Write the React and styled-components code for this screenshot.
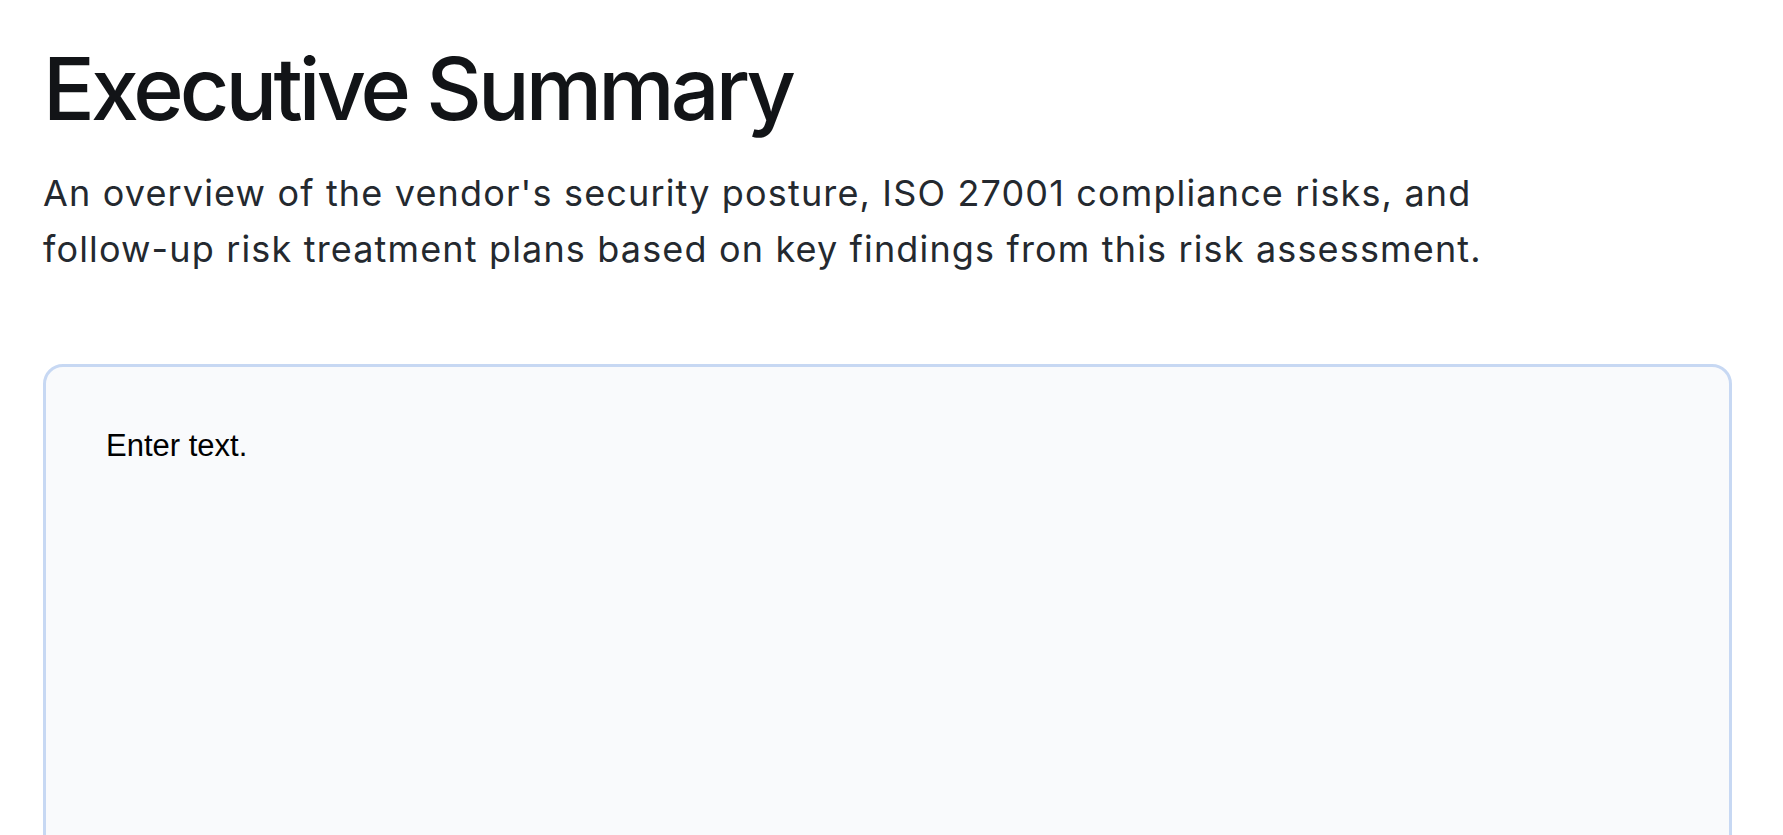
import React from "react";
import styled, { createGlobalStyle } from "styled-components";

const Global = createGlobalStyle`
  html, body { margin: 0; padding: 0; background: #ffffff; }
  body { font-family: Inter, "Noto Sans", sans-serif; }
`;

const Page = styled.main`
  display: flex;
  flex-direction: column;
  padding: 38px 51px 0 43px;
`;

const Title = styled.h1`
  margin: 0;
  font-family: Inter, sans-serif;
  font-size: 86px;
  font-weight: 500;
  line-height: 1.2;
  letter-spacing: -0.045em;
  color: #121417;
`;

const Lead = styled.p`
  margin: 24px 0 0;
  max-width: 1500px;
  font-family: Inter, sans-serif;
  font-size: 36px;
  font-weight: 400;
  line-height: 56px;
  letter-spacing: 0.032em;
  color: #24292f;
`;

const Editor = styled.div`
  margin-top: 87px;
  min-height: 600px;
  border: 3px solid #c7d8f3;
  border-radius: 20px;
  background: #f9fafc;
  padding: 61px 60px;
  font-family: "Liberation Sans", Arial, sans-serif;
  font-size: 31px;
  color: #000000;
`;

export default function App() {
  return (
    <>
      <Global />
      <Page>
        <Title>Executive Summary</Title>
        <Lead>
          An overview of the vendor's security posture, ISO 27001 compliance risks, and
          follow-up risk treatment plans based on key findings from this risk assessment.
        </Lead>
        <Editor>Enter text.</Editor>
      </Page>
    </>
  );
}
